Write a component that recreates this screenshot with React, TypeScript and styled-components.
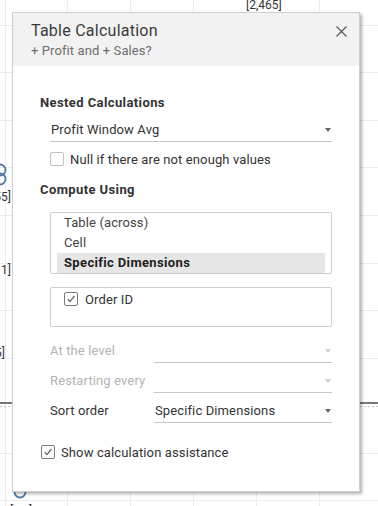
import React from "react";
import styled, { createGlobalStyle } from "styled-components";

const Global = createGlobalStyle`
  html, body { margin: 0; padding: 0; }
  body {
    width: 378px;
    height: 506px;
    overflow: hidden;
    background: #fff;
    font-family: Roboto, "Noto Sans", sans-serif;
    color: #333;
  }
`;

const Stage = styled.div`
  position: relative;
  width: 378px;
  height: 506px;
  overflow: hidden;
  background: #fff;
`;

const Chart = styled.svg`
  display: block;
  width: 378px;
  height: 506px;
`;

const ChartLabel = styled.text`
  font-family: Roboto, "Noto Sans", sans-serif;
  font-size: 12px;
  fill: #333;
`;

const Dialog = styled.div`
  position: absolute;
  left: 12px;
  top: 12px;
  width: 348px;
  height: 480px;
  box-sizing: border-box;
  background: #fff;
  border: 1px solid #cfcfcf;
  box-shadow: 2px 2px 3px rgba(0, 0, 0, 0.3);
  display: flex;
  flex-direction: column;
`;

const Header = styled.div`
  height: 53px;
  box-sizing: border-box;
  background: #f2f2f2;
  padding: 7px 12px 0 18px;
  display: flex;
  justify-content: space-between;
  align-items: flex-start;
`;

const TitleBlock = styled.div`
  display: flex;
  flex-direction: column;
`;

const Title = styled.div`
  font-size: 16px;
  line-height: 22px;
  letter-spacing: 0.25px;
  color: #3b3b3b;
`;

const Subtitle = styled.div`
  font-size: 13px;
  line-height: 18px;
  letter-spacing: 0.1px;
  color: #6e6e6e;
`;

const CloseButton = styled.div`
  width: 11px;
  height: 11px;
  margin-top: 6px;
  display: flex;
`;

const Body = styled.div`
  padding: 28px 26px 0 27px;
  display: flex;
  flex-direction: column;
  letter-spacing: 0.12px;
`;

const SectionTitle = styled.div<{ $mt?: number }>`
  font-size: 13px;
  font-weight: 700;
  line-height: 18px;
  letter-spacing: 0.4px;
  color: #333;
  margin-top: ${(p) => p.$mt ?? 0}px;
`;

const Indent = styled.div<{ $mt?: number }>`
  margin-left: 10px;
  margin-top: ${(p) => p.$mt ?? 0}px;
`;

const Dropdown = styled.div<{ $disabled?: boolean; $width?: number }>`
  width: ${(p) => p.$width ?? 282}px;
  height: 24px;
  box-sizing: border-box;
  border-bottom: 1px solid #c6c6c6;
  display: flex;
  align-items: center;
  justify-content: space-between;
  padding: 0 1px 0 1px;
  font-size: 13px;
  color: ${(p) => (p.$disabled ? "#b5b5b5" : "#333")};
`;

const Arrow = styled.span<{ $disabled?: boolean }>`
  width: 0;
  height: 0;
  border-left: 3.5px solid transparent;
  border-right: 3.5px solid transparent;
  border-top: 4px solid ${(p) => (p.$disabled ? "#cfcfcf" : "#666")};
  margin-top: 1px;
`;

const CheckRow = styled.label<{ $gap?: number; $mt?: number; $ml?: number }>`
  display: flex;
  align-items: center;
  gap: ${(p) => p.$gap ?? 6}px;
  height: 18px;
  font-size: 13px;
  color: #333;
  margin-top: ${(p) => p.$mt ?? 0}px;
  margin-left: ${(p) => p.$ml ?? 0}px;
`;

const Box = styled.span<{ $checked?: boolean }>`
  width: 14px;
  height: 14px;
  box-sizing: border-box;
  border: 1px solid ${(p) => (p.$checked ? "#7a7a7a" : "#c2c2c2")};
  border-radius: 2px;
  background: #fff;
  display: flex;
  align-items: center;
  justify-content: center;
  flex: none;
`;

const ListBox = styled.div<{ $mt?: number }>`
  width: 282px;
  height: 62px;
  box-sizing: border-box;
  border: 1px solid #cdcdcd;
  border-radius: 2px;
  padding: 0 6px;
  margin-top: ${(p) => p.$mt ?? 0}px;
  display: flex;
  flex-direction: column;
`;

const ListItem = styled.div<{ $selected?: boolean }>`
  height: 20px;
  line-height: 20px;
  padding-left: 7px;
  font-size: 13px;
  color: ${(p) => (p.$selected ? "#222" : "#444")};
  font-weight: ${(p) => (p.$selected ? 700 : 400)};
  letter-spacing: ${(p) => (p.$selected ? 0.35 : 0.12)}px;
  background: ${(p) => (p.$selected ? "#e6e6e6" : "transparent")};
`;

const FieldBox = styled.div<{ $mt?: number }>`
  width: 282px;
  height: 40px;
  box-sizing: border-box;
  border: 1px solid #cdcdcd;
  border-radius: 2px;
  padding: 2px 0 0 13px;
  margin-top: ${(p) => p.$mt ?? 0}px;
`;

const FormRows = styled.div<{ $mt?: number }>`
  margin-left: 10px;
  margin-top: ${(p) => p.$mt ?? 0}px;
  display: flex;
  flex-direction: column;
  gap: 6px;
`;

const FormRow = styled.div`
  display: grid;
  grid-template-columns: 104px 178px;
  align-items: center;
  height: 24px;
`;

const RowLabel = styled.span<{ $disabled?: boolean }>`
  font-size: 13px;
  color: ${(p) => (p.$disabled ? "#b3b3b3" : "#333")};
  padding-bottom: 1px;
`;

const Check = ({ checked }: { checked?: boolean }) => (
  <Box $checked={checked}>
    {checked && (
      <svg width="10" height="10" viewBox="0 0 10 10">
        <polyline points="1.8,5.2 4,7.6 8.4,2" fill="none" stroke="#666" strokeWidth="1.3" />
      </svg>
    )}
  </Box>
);

const vLines = [5.5, 67.5, 130.5, 193.5, 256.5, 319.5];
const hLines = [25.5, 72.5, 120.5, 167.5, 215.5, 263.5, 310.5, 358.5, 453.5, 500.5];

export default function App() {
  return (
    <Stage>
      <Global />
      <Chart viewBox="0 0 378 506">
        {vLines.map((x) => (
          <line key={"v" + x} x1={x} y1={0} x2={x} y2={506} stroke="#ececec" strokeWidth={1} />
        ))}
        {hLines.map((y) => (
          <line key={"h" + y} x1={0} y1={y} x2={378} y2={y} stroke="#ececec" strokeWidth={1} />
        ))}
        <line x1={0} y1={406.5} x2={378} y2={406.5} stroke="#c4c4c4" strokeWidth={1} strokeDasharray="2 2" />
        <line x1={0} y1={403} x2={378} y2={403} stroke="#777" strokeWidth={2} />
        <circle cx={0} cy={170} r={5.5} fill="none" stroke="#4e79a7" strokeWidth={1.8} />
        <circle cx={0} cy={179} r={5.5} fill="none" stroke="#4e79a7" strokeWidth={1.8} />
        <circle cx={20} cy={492} r={5.5} fill="none" stroke="#4e79a7" strokeWidth={1.8} />
        <ChartLabel x={246} y={9}>[2,465]</ChartLabel>
        <ChartLabel x={-9} y={201}>[55]</ChartLabel>
        <ChartLabel x={-9} y={274}>[11]</ChartLabel>
        <ChartLabel x={-5} y={357}>5]</ChartLabel>
        <ChartLabel x={10} y={515}>[1,2]</ChartLabel>
      </Chart>

      <Dialog>
        <Header>
          <TitleBlock>
            <Title>Table Calculation</Title>
            <Subtitle>+ Profit and + Sales?</Subtitle>
          </TitleBlock>
          <CloseButton>
            <svg width="11" height="11" viewBox="0 0 11 11">
              <path d="M0.5 0.5 L10.5 10.5 M10.5 0.5 L0.5 10.5" stroke="#555" strokeWidth="1.2" fill="none" />
            </svg>
          </CloseButton>
        </Header>

        <Body>
          <SectionTitle>Nested Calculations</SectionTitle>
          <Indent $mt={6}>
            <Dropdown>
              <span>Profit Window Avg</span>
              <Arrow />
            </Dropdown>
            <CheckRow $mt={8}>
              <Check />
              <span>Null if there are not enough values</span>
            </CheckRow>
          </Indent>

          <SectionTitle $mt={13}>Compute Using</SectionTitle>
          <Indent $mt={13}>
            <ListBox>
              <ListItem>Table (across)</ListItem>
              <ListItem>Cell</ListItem>
              <ListItem $selected>Specific Dimensions</ListItem>
            </ListBox>
            <FieldBox $mt={13}>
              <CheckRow $gap={7}>
                <Check checked />
                <span>Order ID</span>
              </CheckRow>
            </FieldBox>
          </Indent>

          <FormRows $mt={12}>
            <FormRow>
              <RowLabel $disabled>At the level</RowLabel>
              <Dropdown $disabled $width={178}>
                <span />
                <Arrow $disabled />
              </Dropdown>
            </FormRow>
            <FormRow>
              <RowLabel $disabled>Restarting every</RowLabel>
              <Dropdown $disabled $width={178}>
                <span />
                <Arrow $disabled />
              </Dropdown>
            </FormRow>
            <FormRow>
              <RowLabel>Sort order</RowLabel>
              <Dropdown $width={178}>
                <span>Specific Dimensions</span>
                <Arrow />
              </Dropdown>
            </FormRow>
          </FormRows>

          <CheckRow $mt={20} $ml={1}>
            <Check checked />
            <span>Show calculation assistance</span>
          </CheckRow>
        </Body>
      </Dialog>
    </Stage>
  );
}
